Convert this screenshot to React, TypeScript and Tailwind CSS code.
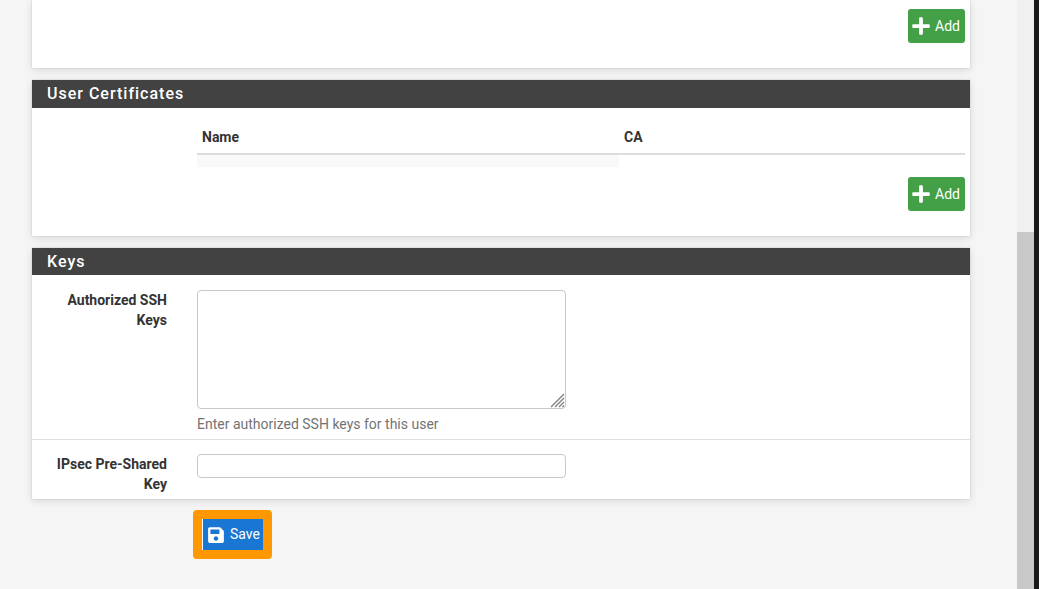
import { FaPlus, FaSave } from 'react-icons/fa';

const panel = 'w-[938px] bg-white shadow-[0_0_1px_rgba(0,0,0,0.25),0_2px_8px_rgba(0,0,0,0.12)]';

const AddButton = () => (
  <div className="flex justify-end pr-[5px]">
    <button className="flex h-[34px] w-[57px] items-center rounded-[3px] bg-[#43a047] pl-[3px] text-[14px] text-white">
      <FaPlus size={20} className="shrink-0" />
      <span className="ml-[4px]">Add</span>
    </button>
  </div>
);

const PanelHeading = ({ title, height }: { title: string; height: string }) => (
  <div className={`flex items-center bg-[#424242] pl-[15px] text-[16px] font-medium tracking-[1px] text-white ${height}`}>
    {title}
  </div>
);

const App = () => (
  <div className="flex h-[589px] w-[1039px] overflow-hidden bg-[#f5f5f5] font-['Roboto',sans-serif] text-[#333333]">
    <main className="flex w-[1017px] flex-col pl-[32px]">
      <section className={`h-[68px] pt-[9px] ${panel}`}>
        <AddButton />
      </section>

      <section className={`mt-[12px] h-[156px] ${panel}`}>
        <PanelHeading title="User Certificates" height="h-[28px]" />
        <div className="ml-[165px] mr-[5px]">
          <div className="flex h-[47px] items-end border-b-2 border-[#dddddd] pb-[5px] text-[14px] font-bold">
            <div className="w-[422px] pl-[5px]">Name</div>
            <div className="pl-[5px]">CA</div>
          </div>
          <div className="h-[12px] w-[422px] bg-[#f9f9f9]" />
        </div>
        <div className="mt-[10px]">
          <AddButton />
        </div>
      </section>

      <section className={`mt-[12px] ${panel}`}>
        <PanelHeading title="Keys" height="h-[27px]" />
        <div className="flex h-[165px] border-b border-[#e0e0e0] pt-[15px]">
          <label className="ml-[15px] w-[120px] text-right text-[14px] leading-[20px] font-bold">Authorized SSH Keys</label>
          <div className="ml-[30px]">
            <div className="relative h-[119px] w-[369px]">
              <textarea className="block h-full w-full resize-none rounded-[4px] border border-[#c8c8c8] bg-white" />
              <svg className="absolute right-[1px] bottom-[1px]" width="15" height="15" viewBox="0 0 15 15" stroke="#808080" strokeWidth="1.4">
                <path d="M1 14 14 1M5 14l9-9M9 14l5-5M12.5 14l1.5-1.5" />
              </svg>
            </div>
            <p className="mt-[7px] text-[14px] leading-[16px] text-[#737373]">Enter authorized SSH keys for this user</p>
          </div>
        </div>
        <div className="flex h-[59px] pt-[14px]">
          <label className="ml-[15px] w-[120px] text-right text-[14px] leading-[20px] font-bold">IPsec Pre-Shared Key</label>
          <input type="text" className="ml-[30px] h-[24px] w-[369px] rounded-[4px] border border-[#c8c8c8] bg-white" />
        </div>
      </section>

      <div className="ml-[161px] mt-[11px] w-fit rounded-[4px] bg-[#ff9800] p-[9px]">
        <button className="flex h-[31px] w-[61px] items-center gap-[5px] border-l border-white bg-[#1976d2] pl-[4px] text-[14px] text-white">
          <FaSave size={18} className="shrink-0" />
          <span>Save</span>
        </button>
      </div>
    </main>
    <aside className="flex w-[22px]">
      <div className="flex w-[17px] flex-col">
        <div className="h-[232px] bg-[#f0f0f0]" />
        <div className="h-[357px] bg-[#c8c8c8]" />
      </div>
      <div className="w-[5px] bg-[#1a1a1a]" />
    </aside>
  </div>
);

export default App;
